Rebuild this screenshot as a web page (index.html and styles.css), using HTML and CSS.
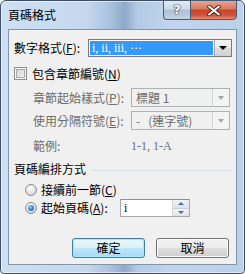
FILE: index.html
```html
<!DOCTYPE html>
<html>
<head>
<meta charset="utf-8">
<link rel="stylesheet" href="styles.css">
</head>
<body>
<div class="window">
  <div class="titlebar">
    <div class="title">頁碼格式</div>
    <div class="caption-buttons">
      <div class="cbtn help">?</div>
      <div class="cbtn close">
        <svg width="14" height="11" viewBox="0 0 14 11"><path d="M2 1.5 L12 9.5 M12 1.5 L2 9.5" stroke="#4a1a14" stroke-width="3.6" stroke-linecap="round"/><path d="M2 1.5 L12 9.5 M12 1.5 L2 9.5" stroke="#ffffff" stroke-width="2" stroke-linecap="round"/></svg>
      </div>
    </div>
  </div>
  <div class="client">
    <div class="row row-format">
      <div class="label label-main">數字格式(<u>F</u>):</div>
      <div class="select select-active">
        <div class="select-value"><span class="hl">i, ii, iii, ···</span></div>
        <div class="drop-btn"><span class="tri"></span></div>
      </div>
    </div>
    <div class="row row-check">
      <span class="checkbox"></span>
      <span class="label">包含章節編號(<u>N</u>)</span>
    </div>
    <div class="row row-sub first-sub">
      <div class="label label-sub disabled">章節起始樣式(<u>P</u>):</div>
      <div class="select select-disabled">
        <div class="select-value">標題 1</div>
        <div class="drop-btn"><span class="tri tri-dis"></span></div>
      </div>
    </div>
    <div class="row row-sub second-sub">
      <div class="label label-sub disabled">使用分隔符號(<u>E</u>):</div>
      <div class="select select-disabled">
        <div class="select-value">-&nbsp;&nbsp;&nbsp;(連字號)</div>
        <div class="drop-btn"><span class="tri tri-dis"></span></div>
      </div>
    </div>
    <div class="row row-example">
      <div class="label label-sub disabled">範例:</div>
      <div class="example disabled">1-1, 1-A</div>
    </div>
    <div class="row row-group">
      <span class="label">頁碼編排方式</span>
      <span class="group-line"></span>
    </div>
    <div class="row row-radio">
      <span class="radio"></span>
      <span class="label">接續前一節(<u>C</u>)</span>
    </div>
    <div class="row row-radio row-radio2">
      <span class="radio checked"></span>
      <span class="label label-start">起始頁碼(<u>A</u>):</span>
      <div class="spin-input">
        <div class="spin-value">i</div>
        <div class="spinner">
          <div class="spin-half"><span class="stri up"></span></div>
          <div class="spin-half"><span class="stri down"></span></div>
        </div>
      </div>
    </div>
    <div class="row row-buttons">
      <div class="button default">確定</div>
      <div class="button">取消</div>
    </div>
  </div>
</div>
</body>
</html>
```

FILE: styles.css
```css
html, body {
  margin: 0;
  padding: 0;
  width: 245px;
  height: 274px;
  overflow: hidden;
  background: #ffffff;
}

body {
  font-family: "Noto Sans CJK TC", "Noto Sans", sans-serif;
  font-size: 12px;
  line-height: 14px;
  color: #000;
}

.window {
  box-sizing: border-box;
  width: 245px;
  height: 274px;
  border: 1px solid #3e4f63;
  border-radius: 6px 6px 4px 4px;
  background: linear-gradient(90deg, #cddff2 0%, #c5d8ee 35%, #a9c2de 45%, #8ea9c9 51%, #b3cae4 56%, #c1d6ec 70%, #bad0e9 100%);
  display: flex;
  flex-direction: column;
  box-shadow: inset 0 0 0 1px rgba(255,255,255,0.55);
}

.titlebar {
  height: 28px;
  display: flex;
  align-items: flex-start;
  position: relative;
}

.title {
  flex: 1;
  padding: 7px 0 0 7px;
  font-size: 12px;
  line-height: 14px;
  color: #000;
}

.caption-buttons {
  display: flex;
  margin-right: 7px;
  margin-top: -1px;
}

.cbtn {
  box-sizing: border-box;
  height: 20px;
  border: 1px solid #4b5a6e;
  display: flex;
  align-items: center;
  justify-content: center;
}

.help {
  width: 27px;
  border-radius: 0 0 0 4px;
  border-right: none;
  background: linear-gradient(180deg, #e3ebf4 0%, #cfdbe8 45%, #aebfd3 50%, #c3d3e3 100%);
  font-family: "DejaVu Sans", sans-serif;
  font-weight: bold;
  font-size: 13px;
  color: #fff;
  text-shadow: 0 0 1px #3a4656, 0 0 1px #3a4656, 0 0 2px #3a4656;
}

.close {
  width: 47px;
  border-radius: 0 0 4px 0;
  background: linear-gradient(180deg, #e8a493 0%, #d9775f 45%, #c5442a 50%, #d0563c 80%, #e09077 100%);
}

.client {
  flex: 1;
  margin: 0 7px 8px 7px;
  border: 1px solid #8295ad;
  background: #f0f0f0;
  padding: 9px 4px 0 5px;
  display: flex;
  flex-direction: column;
}

.row {
  display: flex;
  align-items: center;
}

.label {
  white-space: nowrap;
}

u {
  text-decoration: underline;
  text-underline-offset: 1px;
}

.disabled {
  color: #6d6d6d;
}

.row-format {
  height: 18px;
}

.label-main {
  width: 74px;
}

.select {
  box-sizing: border-box;
  display: flex;
  border: 1px solid #a4a4a4;
  background: #fff;
}

.select-active {
  width: 144px;
  height: 18px;
  border-color: #7a7a7a;
}

.select-value {
  flex: 1;
  display: flex;
  align-items: center;
  padding: 1px;
}

.hl {
  flex: 1;
  align-self: stretch;
  background: #3399ff;
  color: #fff;
  font-family: "Liberation Serif", "Noto Sans CJK TC", serif;
  font-size: 12px;
  line-height: 14px;
  padding-left: 2px;
}

.drop-btn {
  width: 17px;
  box-sizing: border-box;
  border-left: 1px solid #a8a8a8;
  background: linear-gradient(180deg, #f3f3f3 0%, #ebebeb 50%, #dcdcdc 51%, #d2d2d2 100%);
  display: flex;
  align-items: center;
  justify-content: center;
}

.tri {
  width: 0;
  height: 0;
  border-left: 4px solid transparent;
  border-right: 4px solid transparent;
  border-top: 4px solid #000;
}

.tri-dis {
  border-left-width: 3.5px;
  border-right-width: 3.5px;
  border-top: 4px solid #a6a6a6;
}

.select-disabled {
  width: 99px;
  height: 19px;
  background: #f0f0f0;
  border-color: #adb2b5;
}

.select-disabled .select-value {
  color: #6d6d6d;
  padding-left: 4px;
  font-size: 12px;
}

.select-disabled .drop-btn {
  border-left: 1px solid #d4d4d4;
  background: #f4f4f4;
}

.row-check {
  margin-top: 10px;
  height: 13px;
}

.checkbox {
  box-sizing: border-box;
  width: 13px;
  height: 13px;
  border: 1px solid #8e8f8f;
  background: #f4f4f4;
  box-shadow: inset 0 0 0 1px #f4f4f4, inset 0 0 0 2px #ababab;
  background-image: linear-gradient(135deg, #d0d0d0 0%, #f6f6f6 100%);
  margin-right: 5px;
  margin-left: 0;
}

.row-sub {
  padding-left: 19px;
}

.first-sub {
  margin-top: 8px;
}

.second-sub {
  margin-top: 4px;
}

.label-sub {
  width: 98px;
}

.row-example {
  margin-top: 9px;
  padding-left: 19px;
  height: 14px;
}

.example {
  font-family: "Liberation Serif", serif;
  font-size: 12px;
}

.row-group {
  margin-top: 9px;
  height: 14px;
}

.group-line {
  flex: 1;
  height: 1px;
  background: #d5dfe5;
  margin-left: 6px;
  margin-right: 0;
  margin-top: 2px;
}

.row-radio {
  margin-top: 7px;
  height: 14px;
  padding-left: 11px;
}

.row-radio2 {
  margin-top: 2px;
  height: 18px;
}

.radio {
  box-sizing: border-box;
  width: 12px;
  height: 12px;
  border-radius: 50%;
  border: 1px solid #8e8f8f;
  background: radial-gradient(circle at 40% 35%, #ffffff 0%, #e6e6e6 45%, #c8c8c8 100%);
  margin-right: 4px;
  display: flex;
  align-items: center;
  justify-content: center;
}

.radio.checked::after {
  content: "";
  width: 6px;
  height: 6px;
  border-radius: 50%;
  background: radial-gradient(circle at 40% 35%, #8fd3ff 0%, #2f7fd0 55%, #154f8f 100%);
}

.label-start {
  width: 79px;
}

.spin-input {
  box-sizing: border-box;
  width: 70px;
  height: 18px;
  border: 1px solid #a9a9a9;
  border-top-color: #8f8f8f;
  background: #fff;
  display: flex;
}

.spin-value {
  flex: 1;
  padding-left: 3px;
  font-family: "Liberation Serif", serif;
  line-height: 16px;
}

.spinner {
  width: 16px;
  display: flex;
  flex-direction: column;
  border-left: 1px solid #d7d7d7;
}

.spin-half {
  flex: 1;
  display: flex;
  align-items: center;
  justify-content: center;
  background: linear-gradient(180deg, #f2f2f2, #dde3ea);
  border-bottom: 1px solid #c9ced4;
}

.spin-half:last-child {
  border-bottom: none;
}

.stri {
  width: 0;
  height: 0;
  border-left: 3px solid transparent;
  border-right: 3px solid transparent;
}

.stri.up {
  border-bottom: 3px solid #4f6f94;
}

.stri.down {
  border-top: 3px solid #4f6f94;
}

.row-buttons {
  margin-top: 21px;
  justify-content: flex-end;
  gap: 11px;
  padding-right: 3px;
}

.button {
  box-sizing: border-box;
  width: 73px;
  height: 20px;
  border: 1px solid #707070;
  border-radius: 3px;
  background: linear-gradient(180deg, #f2f2f2 0%, #ebebeb 50%, #dddddd 51%, #cfcfcf 100%);
  box-shadow: inset 0 0 0 1px #fcfcfc;
  display: flex;
  align-items: center;
  justify-content: center;
}

.button.default {
  border-color: #3c7fb1;
  background: linear-gradient(180deg, #eaf6fd 0%, #d9f0fc 50%, #bee6fd 51%, #a7d9f5 100%);
  box-shadow: inset 0 0 0 1px #a8e8fd;
}
```
